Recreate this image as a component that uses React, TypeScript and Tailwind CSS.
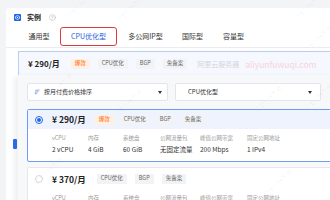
import { CircleHelp, ArrowDownWideNarrow } from 'lucide-react';

const TABS = [
  { label: '通用型', w: 'w-[38px]' },
  { label: 'CPU优化型', w: 'w-[57px]', active: true },
  { label: '多公网IP型', w: 'w-[53px]' },
  { label: '国际型', w: 'w-[37px]' },
  { label: '容量型', w: 'w-[41px]' },
];

const SPECS = [
  { label: 'vCPU', value: '2 vCPU', w: 'w-[36px]' },
  { label: '内存', value: '4 GiB', w: 'w-[35px]' },
  { label: '系统盘', value: '60 GiB', w: 'w-[37px]' },
  { label: '公网流量包', value: '无固定流量', w: 'w-[40px]' },
  { label: '峰值公网带宽', value: '200 Mbps', w: 'w-[47px]' },
  { label: '固定公网地址', value: '1 IPv4', w: 'w-[50px]' },
];

const MARKS = [
  'left-[62px] top-[2px]',
  'left-[112px] top-[6px]',
  'left-[290px] top-[4px]',
  'left-[300px] top-[36px]',
  'left-[40px] top-[84px]',
  'left-[110px] top-[100px]',
  'left-[250px] top-[96px]',
  'left-[300px] top-[94px]',
  'left-[30px] top-[168px]',
  'left-[260px] top-[180px]',
];

function Tag({ children, hot }: { children: React.ReactNode; hot?: boolean }) {
  return (
    <span
      className={`inline-flex items-center h-[10px] px-[4px] rounded-[1px] text-[5.5px] leading-none ${
        hot ? 'bg-[#fff0e5] text-[#ff6a00]' : 'bg-[#f2f3f5] text-[#666]'
      }`}
    >
      {children}
    </span>
  );
}

function Caret() {
  return <span className="w-0 h-0 border-l-[2.5px] border-r-[2.5px] border-t-[3px] border-l-transparent border-r-transparent border-t-[#333]" />;
}

export default function App() {
  return (
    <div className="relative w-[330px] h-[200px] overflow-hidden bg-[#f3f4f6] pt-[8px] pl-[6px] font-['Noto_Sans_CJK_SC',sans-serif]">
      <div className="relative h-[192px] bg-white rounded-tl-[4px]">
        {/* header */}
        <div className="flex items-center gap-[6px] pt-[6px] pl-[8px] h-[13px]">
          <svg width="7" height="7" viewBox="0 0 14 14">
            <rect width="14" height="14" rx="2" fill="#1f63e6" />
            <path d="M7 3 L11 5.2 V8.8 L7 11 L3 8.8 V5.2 Z" fill="none" stroke="#fff" strokeWidth="1.4" />
            <circle cx="7" cy="7" r="1.3" fill="#fff" />
          </svg>
          <span className="text-[7px] font-semibold text-[#222] leading-none">实例</span>
          <CircleHelp size={7} strokeWidth={1.6} className="text-[#aaa] ml-[2px]" />
        </div>

        {/* tabs */}
        <div className="flex gap-[2px] mt-[6px] pl-[14px] h-[19px] border-b border-[#ececec] box-content pb-[1px]">
          {TABS.map((t) => (
            <div
              key={t.label}
              className={`${t.w} flex items-center justify-center text-[7px] leading-none ${
                t.active ? 'border-[1.5px] border-[#e0383e] rounded-[3px] text-[#1f5fe0]' : 'text-[#333]'
              }`}
            >
              {t.label}
            </div>
          ))}
        </div>

        {/* current selection row */}
        <div className="ml-[12px] mt-[3px] h-[26px] border-t border-l border-[#b9cdf3] bg-[#f5f8fe] flex items-center pl-[9px] pb-[1px]">
          <span className="text-[8px] font-bold text-[#222] leading-none">¥ 290/月</span>
          <div className="flex items-center gap-[8px] ml-[11px]">
            <Tag hot>爆款</Tag>
            <Tag>CPU优化</Tag>
            <Tag>BGP</Tag>
            <Tag>免备案</Tag>
          </div>
          <span className="ml-[10px] text-[7px] text-[#d3d6dc] leading-none">阿里云服务器</span>
          <span className="ml-[6px] text-[8.5px] text-[#f8d3db] leading-none">aliyunfuwuqi.com</span>
        </div>

        {/* underlying content peeking out */}
        <div className="absolute left-[7px] top-[131px] w-[4px] h-[10px] bg-[#2f6cf0] rounded-[1px]" />

        {/* dropdown popover */}
        <div className="absolute left-[12px] top-[67px] w-[330px] h-[140px] bg-[#f7f8fa] shadow-[-3px_2px_6px_rgba(0,0,0,0.08)] pl-[9px] pt-[8px]">
          <div className="flex gap-[7px]">
            <div className="w-[141px] h-[18px] bg-white border border-[#e3e5ea] rounded-[2px] flex items-center pl-[6px] pr-[5px]">
              <ArrowDownWideNarrow size={6} strokeWidth={2} className="text-[#5b7bd5]" />
              <span className="ml-[4px] text-[6px] text-[#333] leading-none flex-1">按月付费价格排序</span>
              <Caret />
            </div>
            <div className="w-[146px] h-[18px] bg-white border border-[#e3e5ea] rounded-[2px] flex items-center pl-[12px] pr-[8px]">
              <span className="text-[6px] text-[#333] leading-none flex-1">CPU优化型</span>
              <Caret />
            </div>
          </div>

          {/* selected card */}
          <div className="mt-[8px] w-[320px] border border-[#6f9cf2] rounded-[2px] bg-white">
            <div className="h-[19px] bg-[#eef3fe] flex items-center pl-[7px]">
              <span className="w-[8px] h-[8px] rounded-full border border-[#1f63e6] flex items-center justify-center bg-white">
                <span className="w-[4px] h-[4px] rounded-full bg-[#1f63e6]" />
              </span>
              <span className="ml-[9px] text-[8.5px] font-bold text-[#222] leading-none">¥ 290/月</span>
              <div className="flex items-center gap-[6px] ml-[9px]">
                <Tag hot>爆款</Tag>
                <Tag>CPU优化</Tag>
                <Tag>BGP</Tag>
                <Tag>免备案</Tag>
              </div>
            </div>
            <div className="flex pl-[24px] pt-[7px] h-[32px]">
              {SPECS.map((s) => (
                <div key={s.label} className={`${s.w} flex flex-col gap-[4px]`}>
                  <span className="text-[5.5px] text-[#999] leading-none whitespace-nowrap">{s.label}</span>
                  <span className="text-[6.5px] text-[#333] leading-none whitespace-nowrap">{s.value}</span>
                </div>
              ))}
            </div>
          </div>

          {/* next card */}
          <div className="mt-[5px] w-[320px] border border-[#e6e8ec] rounded-[2px] bg-white">
            <div className="h-[19px] flex items-center pl-[7px] pt-[3px]">
              <span className="w-[8px] h-[8px] rounded-full border border-[#d5d8de] bg-white" />
              <span className="ml-[9px] text-[8.5px] font-bold text-[#222] leading-none">¥ 370/月</span>
              <div className="flex items-center gap-[8px] ml-[11px]">
                <Tag>CPU优化</Tag>
                <Tag>BGP</Tag>
                <Tag>免备案</Tag>
              </div>
            </div>
            <div className="flex pl-[24px] pt-[9px] h-[32px]">
              {SPECS.map((s) => (
                <div key={s.label} className={`${s.w} flex flex-col`}>
                  <span className="text-[5.5px] text-[#999] leading-none whitespace-nowrap">{s.label}</span>
                </div>
              ))}
            </div>
          </div>
        </div>
      </div>

      {/* faint diagonal watermarks */}
      {MARKS.map((m) => (
        <span
          key={m}
          className={`absolute ${m} -rotate-45 text-[6px] text-[rgba(0,0,0,0.06)] leading-none pointer-events-none whitespace-nowrap`}
        >
          阿里云服务器
        </span>
      ))}
    </div>
  );
}
